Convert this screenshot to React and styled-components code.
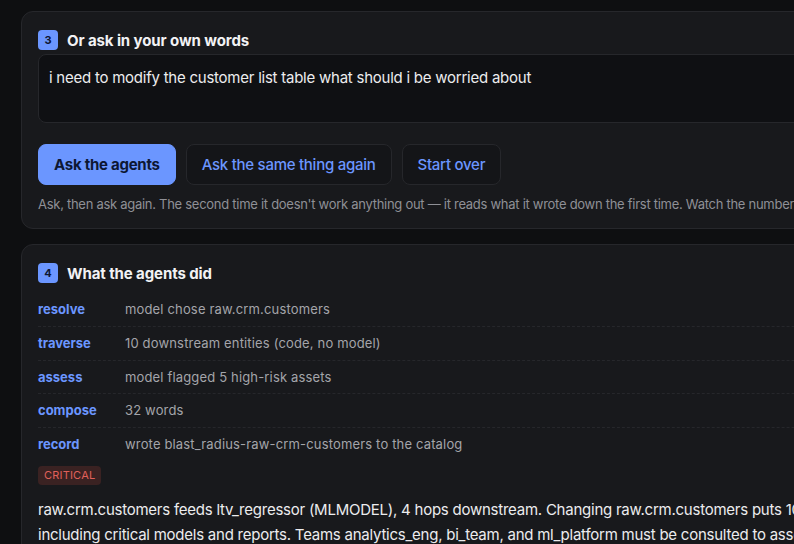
import React, { useState } from 'react';
import styled, { createGlobalStyle } from 'styled-components';

const GlobalStyle = createGlobalStyle`
  html, body {
    margin: 0;
    padding: 0;
    background: #0e0f11;
    overflow: hidden;
  }
  body {
    font-family: Inter, "Noto Sans", "Liberation Sans", sans-serif;
    color: #e8e8ea;
    -webkit-font-smoothing: antialiased;
  }
`;

const Page = styled.main`
  width: 1100px;
  padding: 11px 0 0 21px;
  display: flex;
  flex-direction: column;
  gap: 15px;
`;

const Card = styled.section`
  background: #18191c;
  border: 1px solid #26272b;
  border-radius: 12px;
  padding: 18px 16px ${props => props.$bottom || '17px'};
`;

const CardHeader = styled.header`
  display: flex;
  align-items: center;
  gap: 9px;
  height: 20px;
  margin-bottom: 4px;
`;

const StepBadge = styled.span`
  width: 20px;
  height: 20px;
  border-radius: 4px;
  background: #6b96ff;
  color: #0d1733;
  font-size: 11px;
  font-weight: 700;
  display: inline-flex;
  align-items: center;
  justify-content: center;
`;

const CardTitle = styled.h2`
  margin: 0;
  font-size: 15px;
  font-weight: 700;
  color: #f2f2f4;
  letter-spacing: -0.1px;
`;

const Question = styled.textarea`
  display: block;
  width: 100%;
  box-sizing: border-box;
  height: 69px;
  resize: none;
  background: #0f1013;
  border: 1px solid #26272b;
  border-radius: 8px;
  padding: 13px 10px;
  color: #ececee;
  font-family: inherit;
  font-size: 15px;
  letter-spacing: -0.24px;
  line-height: 20px;
  outline: none;
`;

const ButtonRow = styled.div`
  display: flex;
  gap: 10px;
  margin-top: 21px;
`;

const Button = styled.button`
  height: 41px;
  padding: 0 15px;
  border-radius: 8px;
  font-family: inherit;
  font-size: 15px;
  letter-spacing: -0.26px;
  cursor: pointer;
  border: 1px solid ${props => props.$primary ? '#6b96ff' : '#26272b'};
  background: ${props => props.$primary ? '#6b96ff' : '#141518'};
  color: ${props => props.$primary ? '#0d1733' : '#6b96ff'};
  font-weight: ${props => props.$primary ? 700 : 500};
`;

const Hint = styled.p`
  margin: 10px 0 0;
  font-size: 13px;
  letter-spacing: -0.28px;
  line-height: 18px;
  color: #8f9096;
  white-space: nowrap;
`;

const Steps = styled.div`
  margin-top: 10px;
`;

const StepRow = styled.div`
  display: grid;
  grid-template-columns: 87px 1fr;
  align-items: center;
  padding: 8px 0 7.75px;
  line-height: 17px;
  font-size: 13px;
  border-bottom: 1px dashed ${props => props.$last ? 'transparent' : '#26272b'};
`;

const StepName = styled.span`
  color: #6b96ff;
  font-weight: 700;
`;

const StepText = styled.span`
  color: #a4a5aa;
  letter-spacing: 0.16px;
`;

const Severity = styled.span`
  display: inline-block;
  margin-top: 4px;
  padding: 0 6px;
  height: 19px;
  line-height: 19px;
  border-radius: 4px;
  background: #3a2222;
  color: #e0605a;
  font-size: 11px;
  letter-spacing: 0.2px;
`;

const Summary = styled.p`
  margin: 12px 0 0;
  font-size: 15px;
  letter-spacing: -0.24px;
  line-height: 25px;
  color: #ececee;
  white-space: nowrap;
`;

const steps = [
  ['resolve', 'model chose raw.crm.customers'],
  ['traverse', '10 downstream entities (code, no model)'],
  ['assess', 'model flagged 5 high-risk assets'],
  ['compose', '32 words'],
  ['record', 'wrote blast_radius-raw-crm-customers to the catalog'],
];

export default function App() {
  const [question, setQuestion] = useState(
    'i need to modify the customer list table what should i be worried about'
  );

  return (
    <>
      <GlobalStyle />
      <Page>
        <Card $bottom="15px">
          <CardHeader>
            <StepBadge>3</StepBadge>
            <CardTitle>Or ask in your own words</CardTitle>
          </CardHeader>
          <Question value={question} onChange={e => setQuestion(e.target.value)} />
          <ButtonRow>
            <Button $primary>Ask the agents</Button>
            <Button>Ask the same thing again</Button>
            <Button>Start over</Button>
          </ButtonRow>
          <Hint>
            Ask, then ask again. The second time it doesn't work anything out — it reads what it wrote down the first time. Watch the numbers change.
          </Hint>
        </Card>

        <Card>
          <CardHeader>
            <StepBadge>4</StepBadge>
            <CardTitle>What the agents did</CardTitle>
          </CardHeader>
          <Steps>
            {steps.map(([name, text], i) => (
              <StepRow key={name} $last={i === steps.length - 1}>
                <StepName>{name}</StepName>
                <StepText>{text}</StepText>
              </StepRow>
            ))}
          </Steps>
          <Severity>CRITICAL</Severity>
          <Summary>
            raw.crm.customers feeds ltv_regressor (MLMODEL), 4 hops downstream. Changing raw.crm.customers puts 10 downstream assets at risk,
            <br />
            including critical models and reports. Teams analytics_eng, bi_team, and ml_platform must be consulted to assess the change.
          </Summary>
        </Card>
      </Page>
    </>
  );
}
